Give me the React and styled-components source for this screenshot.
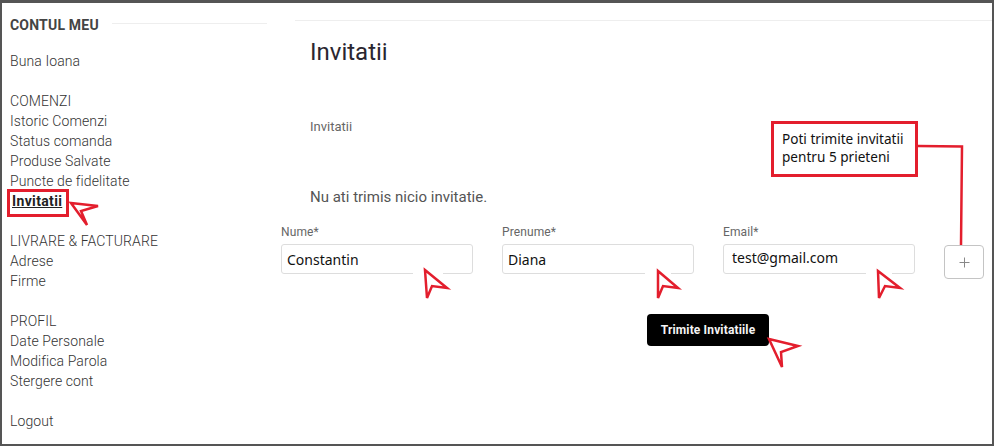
import React from "react";
import styled, { createGlobalStyle } from "styled-components";

const Global = createGlobalStyle`
  html, body { margin: 0; padding: 0; background: #fff; }
  *, *::before, *::after { box-sizing: border-box; }
`;

const Frame = styled.div`
  position: relative;
  width: 994px;
  height: 446px;
  overflow: hidden;
  display: flex;
  background: #fff;
  border-style: solid;
  border-color: #555;
  border-width: 3px 2px 2px 2px;
  font-family: Roboto, "Liberation Sans", sans-serif;
`;

const Aside = styled.aside`
  flex: 0 0 265px;
  padding: 12px 0 0 8px;
`;

const AsideHeading = styled.div`
  display: flex;
  align-items: center;
  gap: 13px;
  font-size: 14px;
  line-height: 20px;
  font-weight: 700;
  letter-spacing: 0.2px;
  color: #444;
  margin-bottom: 16px;
  &::after {
    content: "";
    flex: 1;
    height: 1px;
    margin-top: -3px;
    background: #eee;
  }
`;

const Group = styled.div`
  margin-bottom: 20px;
`;

const NavItem = styled.div`
  font-size: 14px;
  line-height: 20px;
  font-weight: 300;
  letter-spacing: 0.1px;
  color: #333;
  white-space: nowrap;
`;

const ActiveItem = styled.span`
  position: relative;
  display: inline-block;
  margin-left: 2px;
  font-size: 14px;
  line-height: 20px;
  font-weight: 700;
  letter-spacing: 0.35px;
  color: #222;
  text-decoration: underline;
  &::after {
    content: "";
    position: absolute;
    left: -5px;
    top: -2px;
    width: 62px;
    height: 28px;
    border: 3px solid #e31e2d;
  }
`;

const Main = styled.main`
  flex: 1;
  margin: 17px 0 0 28px;
  border-top: 1px solid #eee;
  padding-left: 15px;
`;

const Title = styled.h1`
  margin: 13px 0 0;
  font-size: 24px;
  line-height: 36px;
  font-weight: 400;
  color: #2a2630;
`;

const Subtitle = styled.div`
  margin-top: 47px;
  font-size: 13px;
  line-height: 20px;
  font-weight: 400;
  color: #666;
`;

const Message = styled.p`
  margin: 50px 0 0;
  font-size: 15px;
  line-height: 20px;
  font-weight: 400;
  color: #555;
`;

const Form = styled.div`
  margin: 18px 0 0 -29px;
`;

const FieldRow = styled.div`
  display: grid;
  grid-template-columns: 192px 192px 192px 40px;
  column-gap: 29px;
  align-items: start;
`;

const Label = styled.div`
  font-size: 12px;
  line-height: 14px;
  letter-spacing: 0.1px;
  color: #666;
  margin-bottom: 5px;
`;

const Input = styled.div`
  height: 30px;
  border: 1px solid #ddd;
  border-radius: 3px;
  padding: ${(p) => (p.$raised ? "0 0 4px 8px" : "0 0 0 5px")};
  display: flex;
  align-items: center;
  font-family: "Noto Sans", "Open Sans", sans-serif;
  font-size: 14px;
  color: #111;
`;

const AddButton = styled.div`
  margin-top: 20px;
  width: 40px;
  height: 34px;
  border: 1px solid #c4c4c4;
  border-radius: 4px;
  display: flex;
  align-items: center;
  justify-content: center;
  color: #777;
`;

const SubmitButton = styled.div`
  margin: 35px 0 0 366px;
  width: 122px;
  height: 32px;
  border-radius: 4px;
  background: #000;
  color: #f4f4f4;
  font-size: 12px;
  font-weight: 700;
  letter-spacing: 0.15px;
  display: flex;
  align-items: center;
  justify-content: center;
`;

const Callout = styled.div`
  position: absolute;
  left: 769px;
  top: 118px;
  width: 147px;
  height: 56px;
  border: 3px solid #e31e2d;
  padding: 6px 0 0 8px;
  background: #fff;
  font-family: "Noto Sans", "Open Sans", sans-serif;
  font-size: 13.6px;
  line-height: 18px;
  color: #111;
  white-space: nowrap;
`;

const Overlay = styled.svg`
  position: absolute;
  left: -2px;
  top: -3px;
  width: 994px;
  height: 446px;
  pointer-events: none;
`;

const arrows = [
  "71,203 98,206 81,211 87,225",
  "425,270 447,288 432,286 427,298",
  "658,271 678,288 663,286 658,298",
  "878,271 900,288 885,286 879,298",
  "769,339 798,346 781,352 782,367",
];

const Annotations = () => (
  <Overlay viewBox="0 0 994 446">
    <rect x="413" y="270" width="30" height="6" fill="#fff" />
    <rect x="645" y="270" width="26" height="6" fill="#fff" />
    <rect x="866" y="270" width="26" height="6" fill="#fff" />
    <path d="M918 146 L962 146.5 L961 245" fill="none" stroke="#e31e2d" strokeWidth="2.5" />
    {arrows.map((points) => (
      <polygon key={points} points={points} fill="#fff" stroke="#e31e2d" strokeWidth="2.5" strokeLinejoin="miter" />
    ))}
  </Overlay>
);

const Plus = () => (
  <svg width="11" height="11" viewBox="0 0 11 11">
    <path d="M5.5 0.5V10.5M0.5 5.5H10.5" stroke="#888" strokeWidth="1" />
  </svg>
);

const groups = [
  { items: ["Buna Ioana"] },
  { items: ["COMENZI", "Istoric Comenzi", "Status comanda", "Produse Salvate", "Puncte de fidelitate"], active: "Invitatii" },
  { items: ["LIVRARE & FACTURARE", "Adrese", "Firme"] },
  { items: ["PROFIL", "Date Personale", "Modifica Parola", "Stergere cont"] },
  { items: ["Logout"] },
];

const fields = [
  { label: "Nume*", value: "Constantin" },
  { label: "Prenume*", value: "Diana" },
  { label: "Email*", value: "test@gmail.com", raised: true },
];

export default function App() {
  return (
    <Frame>
      <Global />
      <Aside>
        <AsideHeading>CONTUL MEU</AsideHeading>
        {groups.map((g) => (
          <Group key={g.items[0]}>
            {g.items.map((item) => (
              <NavItem key={item}>{item}</NavItem>
            ))}
            {g.active && (
              <NavItem>
                <ActiveItem>{g.active}</ActiveItem>
              </NavItem>
            )}
          </Group>
        ))}
      </Aside>
      <Main>
        <Title>Invitatii</Title>
        <Subtitle>Invitatii</Subtitle>
        <Message>Nu ati trimis nicio invitatie.</Message>
        <Form>
          <FieldRow>
            {fields.map((f) => (
              <div key={f.label}>
                <Label>{f.label}</Label>
                <Input $raised={f.raised}>{f.value}</Input>
              </div>
            ))}
            <AddButton>
              <Plus />
            </AddButton>
          </FieldRow>
          <SubmitButton>Trimite Invitatiile</SubmitButton>
        </Form>
      </Main>
      <Callout>
        Poti trimite invitatii
        <br />
        pentru 5 prieteni
      </Callout>
      <Annotations />
    </Frame>
  );
}
